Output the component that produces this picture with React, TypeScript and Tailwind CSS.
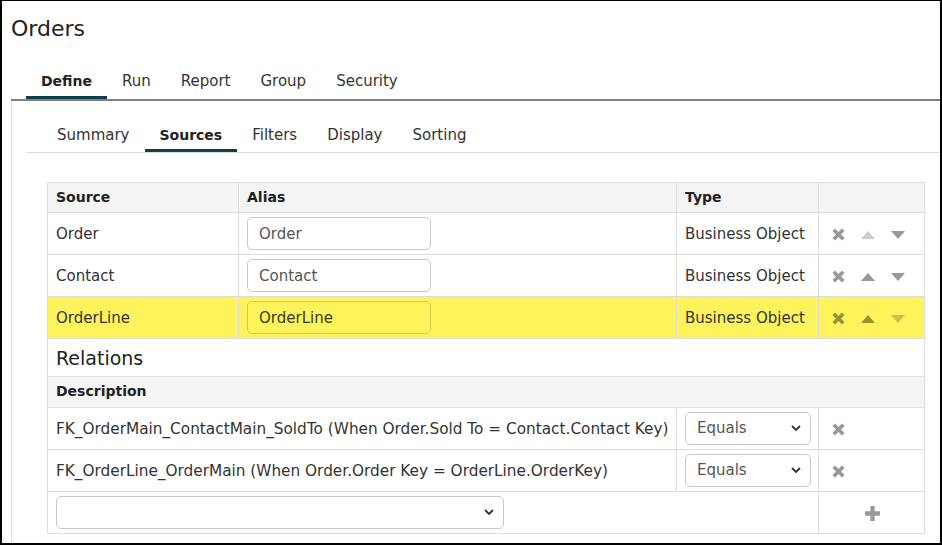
import React from 'react';

const font = { fontFamily: '"DejaVu Sans", "Open Sans", sans-serif' };

// Thick "x" used for remove buttons
const RemoveIcon = ({ className = '' }: { className?: string }) => (
  <svg viewBox="0 0 14 14" className={`h-[13px] w-[13px] ${className}`}>
    <path d="M0.5 3.3 3.3 0.5 7 4.2 10.7 0.5 13.5 3.3 9.8 7 13.5 10.7 10.7 13.5 7 9.8 3.3 13.5 0.5 10.7 4.2 7Z" fill="currentColor" />
  </svg>
);

const UpIcon = ({ className = '' }: { className?: string }) => (
  <svg viewBox="0 0 14 8" className={`h-[8px] w-[14px] ${className}`}>
    <path d="M7 0 14 8H0Z" fill="currentColor" />
  </svg>
);

const DownIcon = ({ className = '' }: { className?: string }) => (
  <svg viewBox="0 0 14 8" className={`h-[8px] w-[14px] ${className}`}>
    <path d="M0 0h14L7 8Z" fill="currentColor" />
  </svg>
);

const PlusIcon = () => (
  <svg viewBox="0 0 14 14" className="h-[15px] w-[15px] text-black/40">
    <path d="M5 0h4v5h5v4H9v5H5V9H0V5h5Z" fill="currentColor" />
  </svg>
);

const Chevron = () => (
  <svg viewBox="0 0 10 6" className="pointer-events-none absolute right-[9px] top-1/2 h-[6px] w-[10px] -translate-y-1/2 text-[#333]">
    <path d="M1 1 5 5 9 1" stroke="currentColor" strokeWidth="1.8" fill="none" />
  </svg>
);

const FakeSelect = ({ value, className }: { value: string; className: string }) => (
  <div className={`relative flex h-[33px] items-center rounded-[5px] border border-[#c8c8c8] bg-white pl-[11px] pt-[1px] text-[#555] ${className}`}>
    {value}
    <Chevron />
  </div>
);

const sources = [
  { name: 'Order', up: false, down: true, active: false },
  { name: 'Contact', up: true, down: true, active: false },
  { name: 'OrderLine', up: true, down: false, active: true },
];

const relations = [
  'FK_OrderMain_ContactMain_SoldTo (When Order.Sold To = Contact.Contact Key)',
  'FK_OrderLine_OrderMain (When Order.Order Key = OrderLine.OrderKey)',
];

const mainTabs = ['Define', 'Run', 'Report', 'Group', 'Security'];
const subTabs = ['Summary', 'Sources', 'Filters', 'Display', 'Sorting'];

export default function App() {
  return (
    <div style={font} className="h-[545px] w-[942px] overflow-hidden bg-white text-[15px] text-[#333]">
      <div className="flex h-full flex-col border-t border-r-2 border-b-2 border-l-2 border-black">
        {/* Title */}
        <h1 className="pl-[9px] pt-[14px] text-[22px] leading-[28px] text-[#222]">Orders</h1>

        {/* Main tabs */}
        <div className="ml-[9px] mt-[28px] flex border-b-2 border-[#808080] pl-[15px]">
          {mainTabs.map((t, i) => (
            <div
              key={t}
              className={`px-[15px] leading-[20px] ${i === 0 ? 'text-[14px] font-bold text-[#222]' : ''}`}
            >
              <span>{t}</span>
              <div className={`mt-[5px] -mx-[15px] h-[3px] ${i === 0 ? 'bg-[#0f3e4d]' : ''}`} />
            </div>
          ))}
        </div>

        {/* Panel */}
        <div className="ml-[9px] flex-1 border-l border-[#dcdcdc]">
          <div className="ml-[15px] flex border-b border-[#dcdcdc] pl-[15px] pt-[24px]">
            {subTabs.map((t, i) => (
              <div key={t} className={`px-[15px] leading-[20px] ${i === 1 ? 'text-[14px] font-bold text-[#222]' : ''}`}>
                <span>{t}</span>
                <div className={`mt-[4px] -mx-[15px] h-[3px] ${i === 1 ? 'bg-[#0f3e4d]' : ''}`} />
              </div>
            ))}
          </div>

          <div className="pl-[35px] pr-[16px] pt-[29px]">
            <table className="w-[877px] table-fixed border-collapse">
              <colgroup>
                <col className="w-[191px]" />
                <col className="w-[438px]" />
                <col className="w-[142px]" />
                <col className="w-[106px]" />
              </colgroup>
              <thead>
                <tr className="h-[30px] bg-[#f4f4f4] text-left text-[14px] font-bold text-[#222]">
                  <th className="border border-[#dddddd] px-[8px]">Source</th>
                  <th className="border border-[#dddddd] px-[8px]">Alias</th>
                  <th className="border border-[#dddddd] px-[8px]">Type</th>
                  <th className="border border-[#dddddd]" />
                </tr>
              </thead>
              <tbody>
                {sources.map((s) => (
                  <tr key={s.name} className={`h-[42px] ${s.active ? 'bg-[#fef35b]' : ''}`}>
                    <td className="border border-[#dddddd] px-[8px] pt-[2px]">{s.name}</td>
                    <td className="border border-[#dddddd] px-[8px]">
                      <div
                        className={`flex h-[33px] w-[184px] items-center rounded-[5px] border pl-[11px] pt-[1px] ${
                          s.active ? 'border-[#d6cc4c] text-[#3c3a1a]' : 'border-[#c8c8c8] text-[#555]'
                        }`}
                      >
                        {s.name}
                      </div>
                    </td>
                    <td className="whitespace-nowrap border border-[#dddddd] px-[8px] pt-[2px]">Business Object</td>
                    <td className="border border-[#dddddd]">
                      <div className="flex items-center pl-[13px] pt-[2px]">
                        <RemoveIcon className="text-black/40" />
                        <UpIcon className={`ml-[16px] ${s.up ? 'text-black/40' : 'text-black/20'}`} />
                        <DownIcon className={`ml-[16px] ${s.down ? 'text-black/40' : 'text-black/20'}`} />
                      </div>
                    </td>
                  </tr>
                ))}
                <tr className="h-[37px]">
                  <td colSpan={4} className="border border-[#dddddd] border-t-0 border-b-0 px-[8px] pt-[2px] text-[19px] text-[#222]">
                    Relations
                  </td>
                </tr>
              </tbody>
            </table>

            <table className="w-[877px] table-fixed border-collapse">
              <colgroup>
                <col className="w-[629px]" />
                <col className="w-[142px]" />
                <col className="w-[106px]" />
              </colgroup>
              <thead>
                <tr className="h-[31px] bg-[#f4f4f4] text-left text-[14px] font-bold text-[#222]">
                  <th colSpan={3} className="border border-[#dddddd] px-[8px]">Description</th>
                </tr>
              </thead>
              <tbody>
                {relations.map((r) => (
                  <tr key={r} className="h-[42px]">
                    <td className="whitespace-nowrap border border-[#dddddd] px-[8px] pt-[2px] text-[15.3px]">{r}</td>
                    <td className="border border-[#dddddd] px-[8px]">
                      <FakeSelect value="Equals" className="w-[126px]" />
                    </td>
                    <td className="border border-[#dddddd] pl-[13px] pt-[2px]">
                      <RemoveIcon className="text-black/40" />
                    </td>
                  </tr>
                ))}
                <tr className="h-[42px]">
                  <td colSpan={2} className="border border-[#dddddd] px-[8px]">
                    <FakeSelect value="" className="w-[448px]" />
                  </td>
                  <td className="border border-[#dddddd]">
                    <div className="flex justify-center pl-[2px] pt-[2px]">
                      <PlusIcon />
                    </div>
                  </td>
                </tr>
              </tbody>
            </table>
          </div>
        </div>
      </div>
    </div>
  );
}
